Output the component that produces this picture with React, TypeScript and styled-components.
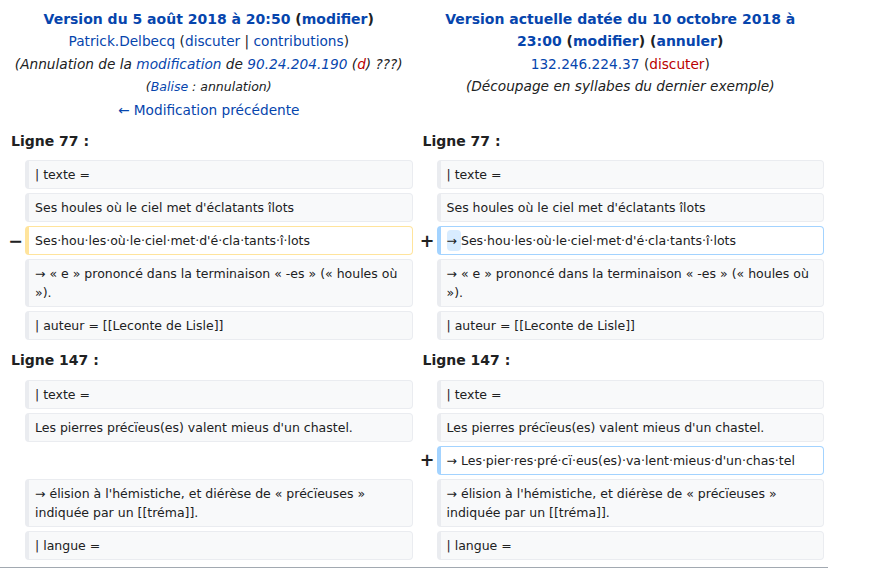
import styled, { createGlobalStyle } from 'styled-components';

type LineKind = 'context' | 'deleted' | 'added' | 'empty';

const GlobalStyle = createGlobalStyle`
  html, body {
    margin: 0;
    padding: 0;
    background: #fff;
  }
  body {
    font-family: "DejaVu Sans", sans-serif;
    color: #202122;
  }
`;

const DiffTable = styled.div`
  width: 828px;
  box-sizing: border-box;
  padding: 8px 4px 7px 5px;
  display: grid;
  grid-template-columns: 16px 1fr 16px 1fr;
  column-gap: 4px;
  row-gap: 4px;
  border-bottom: 1px solid #a2a9b1;
  font-size: 14px;
  line-height: 22.4px;
`;

const TitleCell = styled.div`
  grid-column: span 2;
  padding: 0 6px;
  text-align: center;
  font-size: 13.7px;

  strong {
    font-size: 14px;
  }
`;

const TitleLine = styled.div``;

const Comment = styled.div`
  font-style: italic;
`;

const Tags = styled.span`
  font-size: 12.5px;
  font-style: italic;
`;

const Link = styled.a<{ $missing?: boolean }>`
  color: ${(p) => (p.$missing ? '#ba0000' : '#0645ad')};
  text-decoration: none;
`;

const LineNo = styled.div`
  grid-column: span 2;
  padding: 5px 6px 4px;
  font-weight: bold;
`;

const Row = styled.div`
  display: contents;
`;

const Marker = styled.div`
  align-self: center;
  justify-self: end;
  margin-right: -2px;
  font-size: 17.5px;
  font-weight: bold;
  line-height: 20px;
`;

const lineBorder: Record<LineKind, string> = {
  context: '#eaecf0',
  deleted: '#ffe49c',
  added: '#a3d3ff',
  empty: 'transparent'
};

const Line = styled.div<{ $kind: LineKind }>`
  min-width: 0;
  box-sizing: border-box;
  padding: 4px 6px;
  font-size: 12.5px;
  line-height: 19px;
  white-space: pre-wrap;
  overflow-wrap: break-word;
  border-radius: 4px;
  border: 1px solid ${(p) => lineBorder[p.$kind]};
  border-left-width: 4px;
  background: ${(p) => (p.$kind === 'context' ? '#f8f9fa' : p.$kind === 'empty' ? 'transparent' : '#fff')};
  visibility: ${(p) => (p.$kind === 'empty' ? 'hidden' : 'visible')};
`;

const Changed = styled.ins`
  text-decoration: none;
  background: #d8ecff;
  border-radius: 4px;
  padding: 3px 0;
`;

interface IDiffRow {
  left: LineKind;
  leftText?: React.ReactNode;
  right: LineKind;
  rightText?: React.ReactNode;
}

const NB = '\u00a0';

const section77: IDiffRow[] = [
  { left: 'context', leftText: '| texte =', right: 'context', rightText: '| texte =' },
  {
    left: 'context',
    leftText: "Ses houles où le ciel met d'éclatants îlots",
    right: 'context',
    rightText: "Ses houles où le ciel met d'éclatants îlots"
  },
  {
    left: 'deleted',
    leftText: "Ses·hou·les·où·le·ciel·met·d'é·cla·tants·î·lots",
    right: 'added',
    rightText: (
      <>
        <Changed>→ </Changed>
        Ses·hou·les·où·le·ciel·met·d'é·cla·tants·î·lots
      </>
    )
  },
  {
    left: 'context',
    leftText: `→ «${NB}e${NB}» prononcé dans la terminaison «${NB}-es${NB}» («${NB}houles où »).`,
    right: 'context',
    rightText: `→ «${NB}e${NB}» prononcé dans la terminaison «${NB}-es${NB}» («${NB}houles où »).`
  },
  {
    left: 'context',
    leftText: '| auteur = [[Leconte de Lisle]]',
    right: 'context',
    rightText: '| auteur = [[Leconte de Lisle]]'
  }
];

const section147: IDiffRow[] = [
  { left: 'context', leftText: '| texte =', right: 'context', rightText: '| texte =' },
  {
    left: 'context',
    leftText: "Les pierres précïeus(es) valent mieus d'un chastel.",
    right: 'context',
    rightText: "Les pierres précïeus(es) valent mieus d'un chastel."
  },
  {
    left: 'empty',
    right: 'added',
    rightText: "→ Les·pier·res·pré·cï·eus(es)·va·lent·mieus·d'un·chas·tel"
  },
  {
    left: 'context',
    leftText: `→ élision à l'hémistiche, et diérèse de «${NB}précïeuses${NB}» indiquée par un [[tréma]].`,
    right: 'context',
    rightText: `→ élision à l'hémistiche, et diérèse de «${NB}précïeuses${NB}» indiquée par un [[tréma]].`
  },
  { left: 'context', leftText: '| langue =', right: 'context', rightText: '| langue =' }
];

function markerFor(kind: LineKind) {
  if (kind === 'deleted') return '−';
  if (kind === 'added') return '+';
  return '';
}

function DiffSection({ title, rows }: { title: string; rows: IDiffRow[] }) {
  return (
    <>
      <LineNo>{title}</LineNo>
      <LineNo>{title}</LineNo>
      {rows.map((row, i) => (
        <Row key={i}>
          <Marker>{markerFor(row.left)}</Marker>
          <Line $kind={row.left}>{row.leftText}</Line>
          <Marker>{markerFor(row.right)}</Marker>
          <Line $kind={row.right}>{row.rightText}</Line>
        </Row>
      ))}
    </>
  );
}

export default function App() {
  return (
    <>
      <GlobalStyle />
      <DiffTable>
        <TitleCell>
          <TitleLine>
            <strong>
              <Link href="#">Version du 5 août 2018 à 20:50</Link> (<Link href="#">modifier</Link>)
            </strong>
          </TitleLine>
          <TitleLine>
            <Link href="#">Patrick.Delbecq</Link> (<Link href="#">discuter</Link> |{' '}
            <Link href="#">contributions</Link>)
          </TitleLine>
          <Comment>
            (Annulation de la <Link href="#">modification</Link> de <Link href="#">90.24.204.190</Link> (
            <Link href="#" $missing>
              d
            </Link>
            ) ???)
          </Comment>
          <TitleLine>
            <Tags>
              (<Link href="#">Balise</Link> : annulation)
            </Tags>
          </TitleLine>
          <TitleLine>
            <Link href="#">← Modification précédente</Link>
          </TitleLine>
        </TitleCell>
        <TitleCell>
          <TitleLine>
            <strong>
              <Link href="#">Version actuelle datée du 10 octobre 2018 à 23:00</Link> (
              <Link href="#">modifier</Link>) (<Link href="#">annuler</Link>)
            </strong>
          </TitleLine>
          <TitleLine>
            <Link href="#">132.246.224.37</Link> (
            <Link href="#" $missing>
              discuter
            </Link>
            )
          </TitleLine>
          <Comment>(Découpage en syllabes du dernier exemple)</Comment>
        </TitleCell>

        <DiffSection title={`Ligne 77${NB}:`} rows={section77} />
        <DiffSection title={`Ligne 147${NB}:`} rows={section147} />
      </DiffTable>
    </>
  );
}
